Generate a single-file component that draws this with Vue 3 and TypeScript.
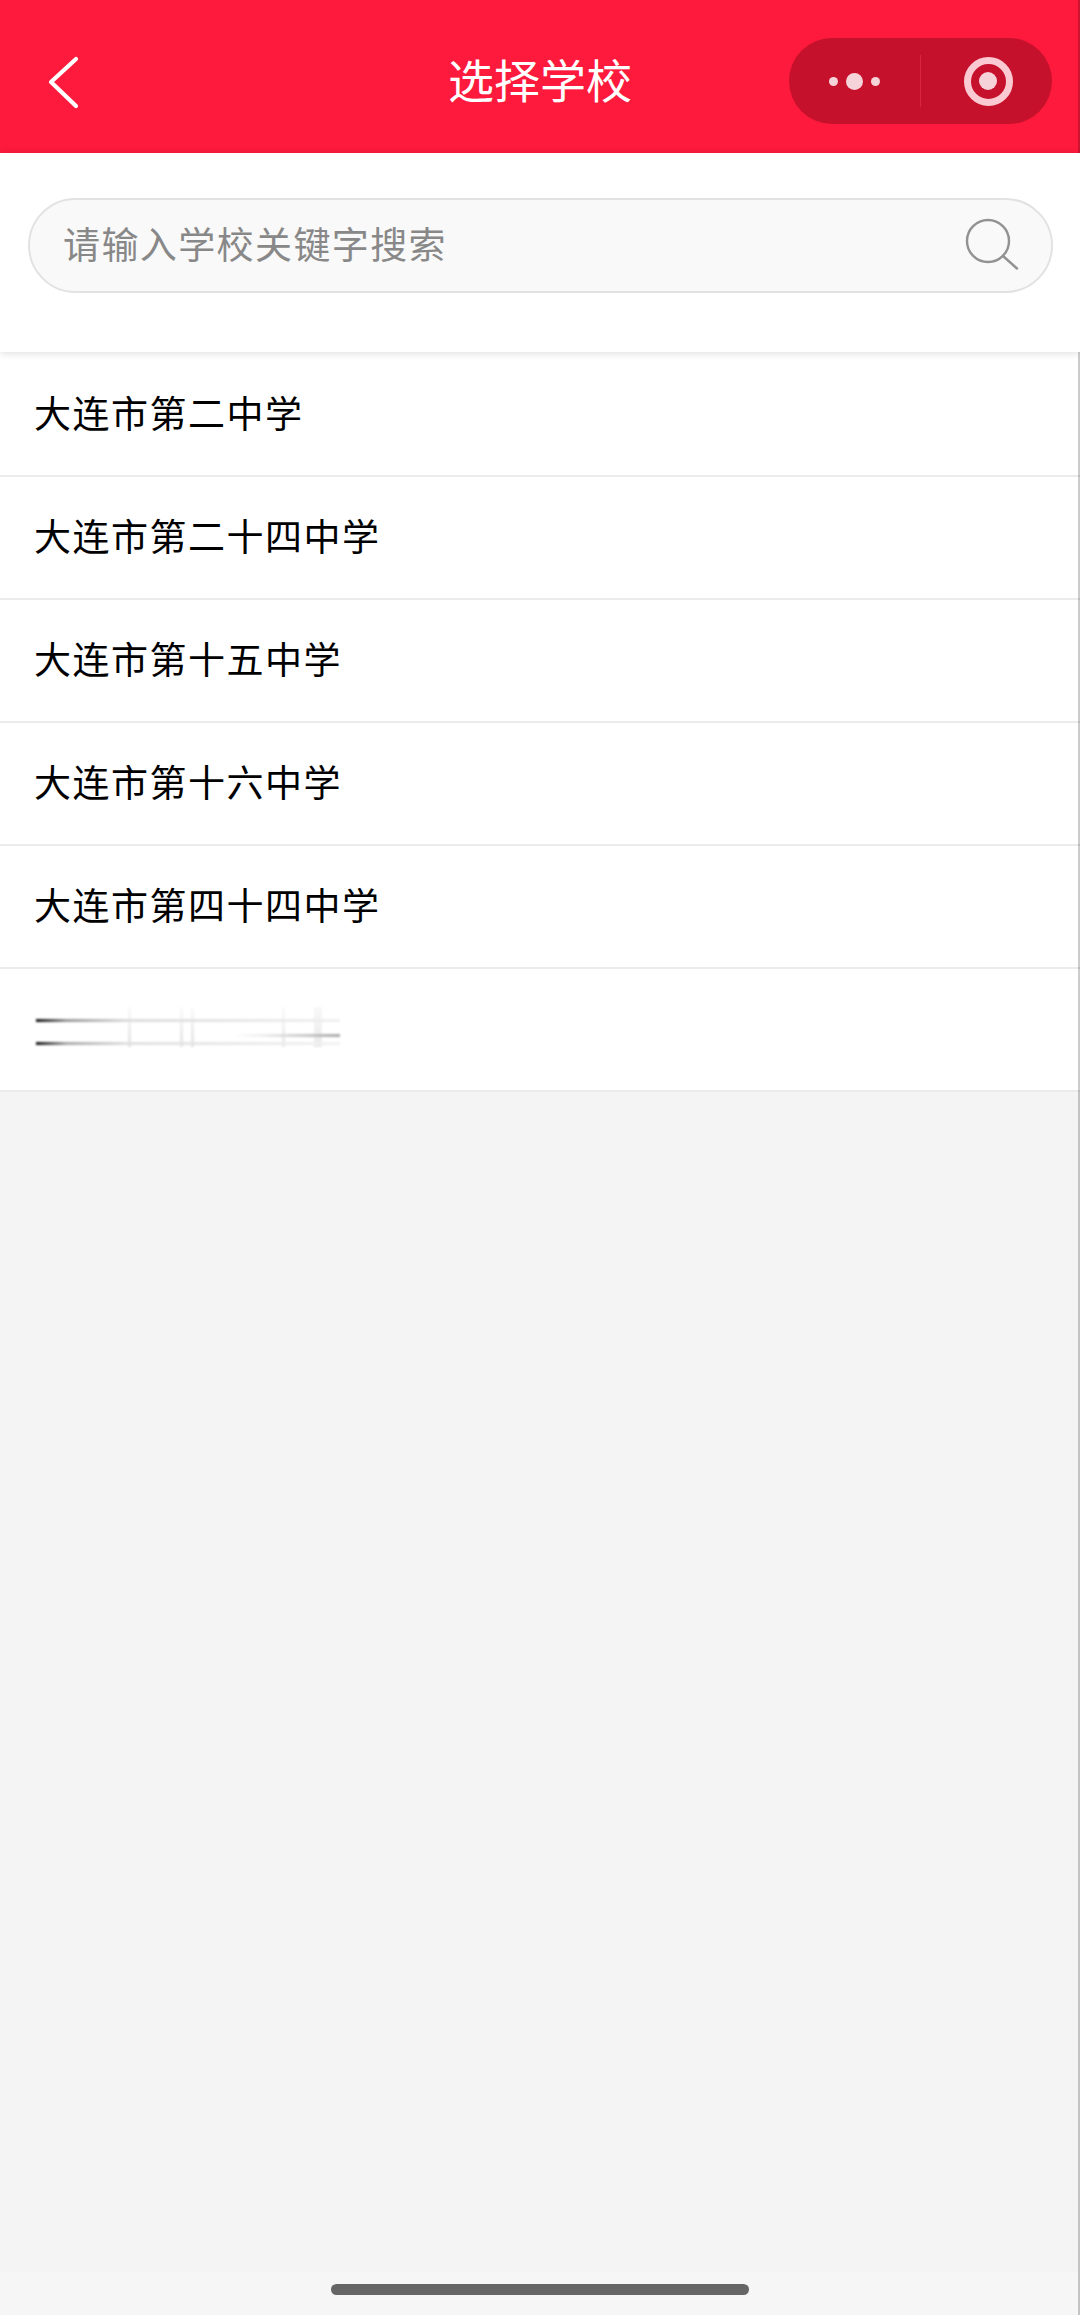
<script setup lang="ts">
const schools: string[] = [
  '大连市第二中学',
  '大连市第二十四中学',
  '大连市第十五中学',
  '大连市第十六中学',
  '大连市第四十四中学',
]
</script>

<template>
  <div class="page">
    <header class="nav">
      <svg class="back" width="34" height="56" viewBox="0 0 34 56">
        <path d="M30 5 L5 28 L30 52" fill="none" stroke="#fff" stroke-width="4.2" stroke-linecap="round" stroke-linejoin="round" />
      </svg>
      <h1 class="title">选择学校</h1>
      <div class="capsule">
        <div class="capsule-side">
          <span class="dot"></span>
          <span class="dot big"></span>
          <span class="dot"></span>
        </div>
        <span class="capsule-line"></span>
        <div class="capsule-side">
          <span class="target"></span>
        </div>
      </div>
    </header>

    <section class="search-wrap">
      <div class="search">
        <span class="placeholder">请输入学校关键字搜索</span>
        <svg class="search-icon" width="54" height="54" viewBox="0 0 54 54">
          <circle cx="23" cy="23" r="21" fill="none" stroke="#929292" stroke-width="2.4" />
          <path d="M38 38 L52 50.5" fill="none" stroke="#929292" stroke-width="2.4" stroke-linecap="round" />
        </svg>
      </div>
    </section>

    <ul class="list">
      <li v-for="name of schools" :key="name" class="row">{{ name }}</li>
      <!-- last school is smeared out in the screenshot -->
      <li class="row">
        <div class="smear"></div>
      </li>
    </ul>

    <div class="home-area">
      <div class="home-bar"></div>
    </div>
    <div class="edge"></div>
  </div>
</template>

<style>
html,
body {
  margin: 0;
  background: #f4f4f4;
}
</style>

<style scoped>
.page {
  position: relative;
  height: 2315px;
  background: #f4f4f4;
  font-family: "Liberation Sans", "Noto Sans CJK SC", sans-serif;
  overflow: hidden;
}

.nav {
  position: relative;
  height: 153px;
  background: #fe1a3c;
  display: flex;
  align-items: center;
  justify-content: center;
}

.back {
  position: absolute;
  left: 46px;
  top: 54px;
}

.title {
  margin: 0;
  padding-top: 10px;
  color: #fff;
  font-size: 46px;
  font-weight: 400;
  line-height: 1;
}

.capsule {
  position: absolute;
  left: 789px;
  top: 38px;
  width: 263px;
  height: 86px;
  border-radius: 43px;
  background: #c6112c;
  display: flex;
  align-items: center;
}

.capsule-side {
  flex: 1;
  display: flex;
  align-items: center;
  justify-content: center;
  gap: 8px;
}

.capsule-line {
  width: 1px;
  height: 52px;
  background: #d82740;
}

.dot {
  width: 9px;
  height: 9px;
  border-radius: 50%;
  background: #f6d3d9;
}

.dot.big {
  width: 17px;
  height: 17px;
}

.target {
  position: relative;
  width: 35px;
  height: 35px;
  margin-left: 3px;
  border: 7px solid #fbc9d1;
  border-radius: 50%;
}

.target::after {
  content: '';
  position: absolute;
  left: 8.5px;
  top: 8.5px;
  width: 18px;
  height: 18px;
  border-radius: 50%;
  background: #f6d3d9;
}

.search-wrap {
  position: relative;
  z-index: 1;
  background: #fff;
  padding: 45px 27px 59px 28px;
  box-shadow: 0 1px 8px rgba(0, 0, 0, 0.14);
}

.search {
  box-sizing: border-box;
  height: 95px;
  border: 2px solid #e2e2e2;
  border-radius: 48px;
  background: #f9f9f9;
  display: flex;
  align-items: center;
  justify-content: space-between;
  padding: 0 32px 0 33px;
}

.placeholder {
  margin-top: -5px;
  color: #888;
  font-size: 37px;
  letter-spacing: 1.4px;
}

.search-icon {
  margin-top: -2px;
}

.list {
  margin: 0;
  padding: 2px 0 0;
  list-style: none;
  background: #fff;
}

.row {
  box-sizing: border-box;
  height: 123px;
  padding: 0 0 5px 34px;
  border-bottom: 2px solid #ebebeb;
  display: flex;
  align-items: center;
  color: #000;
  font-size: 37px;
  letter-spacing: 1.5px;
}

.smear {
  width: 304px;
  height: 40px;
  margin-left: 2px;
  filter: blur(0.8px);
  background:
    linear-gradient(90deg, #111, #999 10%, #dcdcdc 30%, #f0f0f0 100%) 0 12px / 100% 3px no-repeat,
    linear-gradient(90deg, #111, #aaa 10%, #e0e0e0 30%, #f2f2f2 100%) 0 35px / 100% 3px no-repeat,
    linear-gradient(90deg, transparent 65%, #eee 75%, #aaa 100%) 0 27px / 100% 3px no-repeat,
    linear-gradient(#fafafa, #e2e2e2) 92px 0 / 3px 100% no-repeat,
    linear-gradient(#fafafa, #e2e2e2) 144px 0 / 3px 100% no-repeat,
    linear-gradient(#fafafa, #e2e2e2) 155px 0 / 3px 100% no-repeat,
    linear-gradient(#fafafa, #e6e6e6) 246px 0 / 3px 100% no-repeat,
    linear-gradient(#f8f8f8, #eaeaea) 278px 0 / 8px 100% no-repeat;
}

.edge {
  position: absolute;
  right: 0;
  top: 0;
  bottom: 0;
  width: 2px;
  background: rgba(0, 0, 0, 0.2);
}

.home-area {
  position: absolute;
  left: 0;
  right: 0;
  bottom: 0;
  height: 43px;
  background: #f6f6f6;
}

.home-bar {
  position: absolute;
  left: 331px;
  top: 12px;
  width: 418px;
  height: 11px;
  border-radius: 6px;
  background: #666;
}
</style>
